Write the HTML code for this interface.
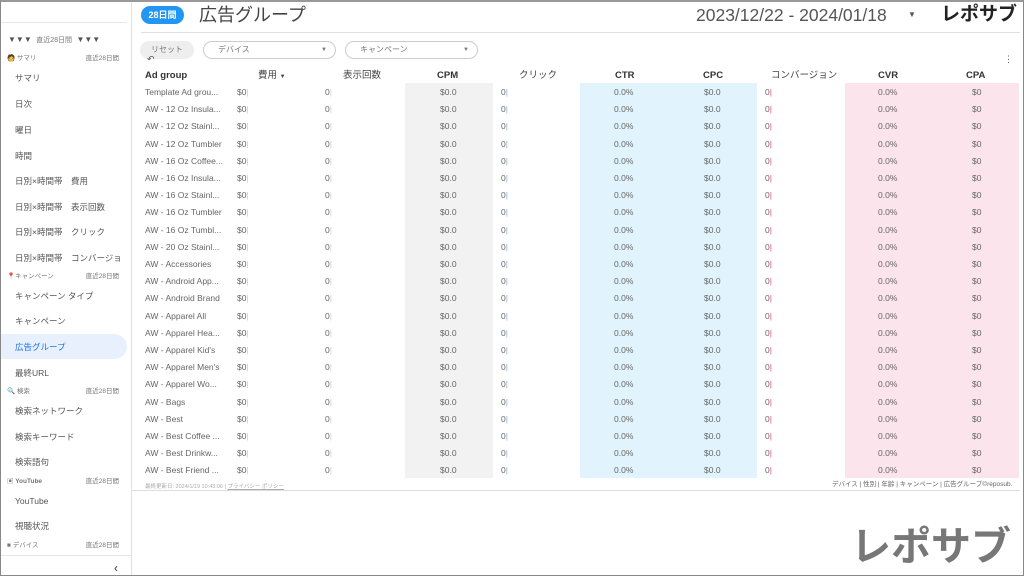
<!DOCTYPE html><html><head><meta charset="utf-8"><style>
*{margin:0;padding:0;box-sizing:border-box}
body{width:1024px;height:576px;overflow:hidden;background:#fff;font-family:"Liberation Sans","Noto Sans CJK JP",sans-serif;position:relative;color:#555}
.a{position:absolute;white-space:nowrap}
.frame{position:absolute;left:0;top:0;width:1024px;height:576px;border:1px solid #888;border-top:2px solid #999;pointer-events:none}
.si{position:absolute;left:15px;font-size:8.5px;color:#555;line-height:12px}
.sh{position:absolute;left:7px;width:112px;font-size:6.5px;color:#777;line-height:9px}
.sh span{position:absolute;right:0}
.r{position:absolute;left:0;width:1024px;height:17px;font-size:8.5px;color:#666;line-height:12px}
.r div{position:absolute;top:0}
.hd{position:absolute;top:70px;font-size:9.5px;font-weight:bold;color:#333;line-height:12px}
</style></head><body>
<div class="a" style="left:0;top:22px;width:127px;height:1px;background:#e6e6e6"></div>
<div class="a" style="left:131px;top:0;width:1px;height:576px;background:#e0e0e0"></div>
<div class="a" style="left:8px;top:34px;font-size:8px;color:#555;line-height:11px">▼▼▼ &nbsp;<span style="font-size:7px;color:#777">直近28日間</span>&nbsp; ▼▼▼</div>
<div class="sh" style="top:54px">🧑 サマリ<span>直近28日間</span></div>
<div class="si" style="top:72px">サマリ</div>
<div class="si" style="top:98px">日次</div>
<div class="si" style="top:124px">曜日</div>
<div class="si" style="top:150px">時間</div>
<div class="si" style="top:175px">日別×時間帯　費用</div>
<div class="si" style="top:201px">日別×時間帯　表示回数</div>
<div class="si" style="top:226px">日別×時間帯　クリック</div>
<div class="si" style="top:252px">日別×時間帯　コンバージョ</div>
<div class="sh" style="top:272px"><span style="color:#d33;position:static">📍</span>キャンペーン<span>直近28日間</span></div>
<div class="si" style="top:290px">キャンペーン タイプ</div>
<div class="si" style="top:315px">キャンペーン</div>
<div class="a" style="left:0;top:334px;width:127px;height:25px;background:#e8f0fe;border-radius:0 13px 13px 0"></div>
<div class="si" style="top:341px;color:#1a73e8">広告グループ</div>
<div class="si" style="top:367px">最終URL</div>
<div class="sh" style="top:387px">🔍 検索<span>直近28日間</span></div>
<div class="si" style="top:405px">検索ネットワーク</div>
<div class="si" style="top:431px">検索キーワード</div>
<div class="si" style="top:456px">検索語句</div>
<div class="sh" style="top:477px;font-weight:bold">▣ YouTube<span style="font-weight:normal">直近28日間</span></div>
<div class="si" style="top:495px">YouTube</div>
<div class="si" style="top:520px">視聴状況</div>
<div class="sh" style="top:541px">■ デバイス<span>直近28日間</span></div>
<div class="a" style="left:0;top:555px;width:131px;height:1px;background:#e6e6e6"></div>
<div class="a" style="left:114px;top:561px;font-size:12px;color:#333">‹</div>
<div class="a" style="left:141px;top:6px;width:43px;height:18px;border-radius:9px;background:#2196f3;color:#fff;font-size:9px;font-weight:bold;text-align:center;line-height:18px">28日間</div>
<div class="a" style="left:199px;top:3px;font-size:18px;color:#444;line-height:24px">広告グループ</div>
<div class="a" style="left:696px;top:4px;font-size:17.5px;color:#555;line-height:22px">2023/12/22 - 2024/01/18</div>
<div class="a" style="left:908px;top:10px;font-size:8px;color:#555">▼</div>
<div class="a" style="left:941px;top:3px;font-size:19px;font-weight:bold;color:#222;line-height:24px">レポサブ</div>
<div class="a" style="left:141px;top:32px;width:879px;height:1px;background:#e0e0e0"></div>
<div class="a" style="left:140px;top:41px;width:54px;height:18px;border-radius:9px;background:#eee;font-size:8px;color:#777;line-height:18px;text-align:center">リセット</div>
<div class="a" style="left:147px;top:54px;font-size:9px;color:#555">↶</div>
<div class="a" style="left:203px;top:41px;width:133px;height:18px;border:1px solid #ccc;border-radius:9px;font-size:8px;color:#777;line-height:16px;padding-left:14px">デバイス<span style="position:absolute;right:8px;font-size:6px">▼</span></div>
<div class="a" style="left:345px;top:41px;width:133px;height:18px;border:1px solid #ccc;border-radius:9px;font-size:8px;color:#777;line-height:16px;padding-left:14px">キャンペーン<span style="position:absolute;right:8px;font-size:6px">▼</span></div>
<div class="a" style="left:1004px;top:54px;font-size:9px;color:#555">⋮</div>
<div class="a" style="left:405px;top:83px;width:88px;height:395px;background:#f2f2f2"></div>
<div class="a" style="left:580px;top:83px;width:177px;height:395px;background:#e1f4fd"></div>
<div class="a" style="left:845px;top:83px;width:174px;height:395px;background:#fce4ec"></div>
<div class="hd" style="left:145px">Ad group</div>
<div class="hd" style="left:258px;font-weight:normal;color:#444">費用 <span style="font-size:6px">▼</span></div>
<div class="hd" style="left:343px;font-weight:normal;color:#444">表示回数</div>
<div class="hd" style="left:437px">CPM</div>
<div class="hd" style="left:519px;font-weight:normal;color:#444">クリック</div>
<div class="hd" style="left:615px">CTR</div>
<div class="hd" style="left:703px">CPC</div>
<div class="hd" style="left:771px;font-weight:normal;color:#444">コンバージョン</div>
<div class="hd" style="left:878px">CVR</div>
<div class="hd" style="left:966px">CPA</div>
<div id="rows"></div>
<script>
var n=["Template Ad grou...","AW - 12 Oz Insula...","AW - 12 Oz Stainl...","AW - 12 Oz Tumbler","AW - 16 Oz Coffee...","AW - 16 Oz Insula...","AW - 16 Oz Stainl...","AW - 16 Oz Tumbler","AW - 16 Oz Tumbl...","AW - 20 Oz Stainl...","AW - Accessories","AW - Android App...","AW - Android Brand","AW - Apparel All","AW - Apparel Hea...","AW - Apparel Kid's","AW - Apparel Men's","AW - Apparel Wo...","AW - Bags","AW - Best","AW - Best Coffee ...","AW - Best Drinkw...","AW - Best Friend ..."];
var h="";for(var i=0;i<n.length;i++){var y=86+i*17.2;
h+='<div class="r" style="top:'+y+'px"><div style="left:145px">'+n[i]+'</div><div style="left:237px">$0<span style="color:#ccc">|</span></div><div style="left:325px">0<span style="color:#ccc">|</span></div><div style="left:440px">$0.0</div><div style="left:501px">0<span style="color:#8ad">|</span></div><div style="left:614px">0.0%</div><div style="left:704px">$0.0</div><div style="left:765px">0<span style="color:#f48">|</span></div><div style="left:878px">0.0%</div><div style="left:972px">$0</div></div>';}
document.getElementById("rows").innerHTML=h;
</script>
<div class="a" style="left:145px;top:482px;font-size:5.5px;color:#aaa">最終更新日: 2024/1/19 10:43:06 | <u>プライバシー ポリシー</u></div>
<div class="a" style="left:832px;top:478px;font-size:6.5px;color:#666">デバイス | 性別 | 年齢 | キャンペーン | 広告グループ©reposub.</div>
<div class="a" style="left:132px;top:490px;width:888px;height:1px;background:#ddd"></div>
<div class="a" style="left:851px;top:522px;font-size:40px;font-weight:bold;color:#777;line-height:50px">レポサブ</div>
<div class="frame"></div>
</body></html>
